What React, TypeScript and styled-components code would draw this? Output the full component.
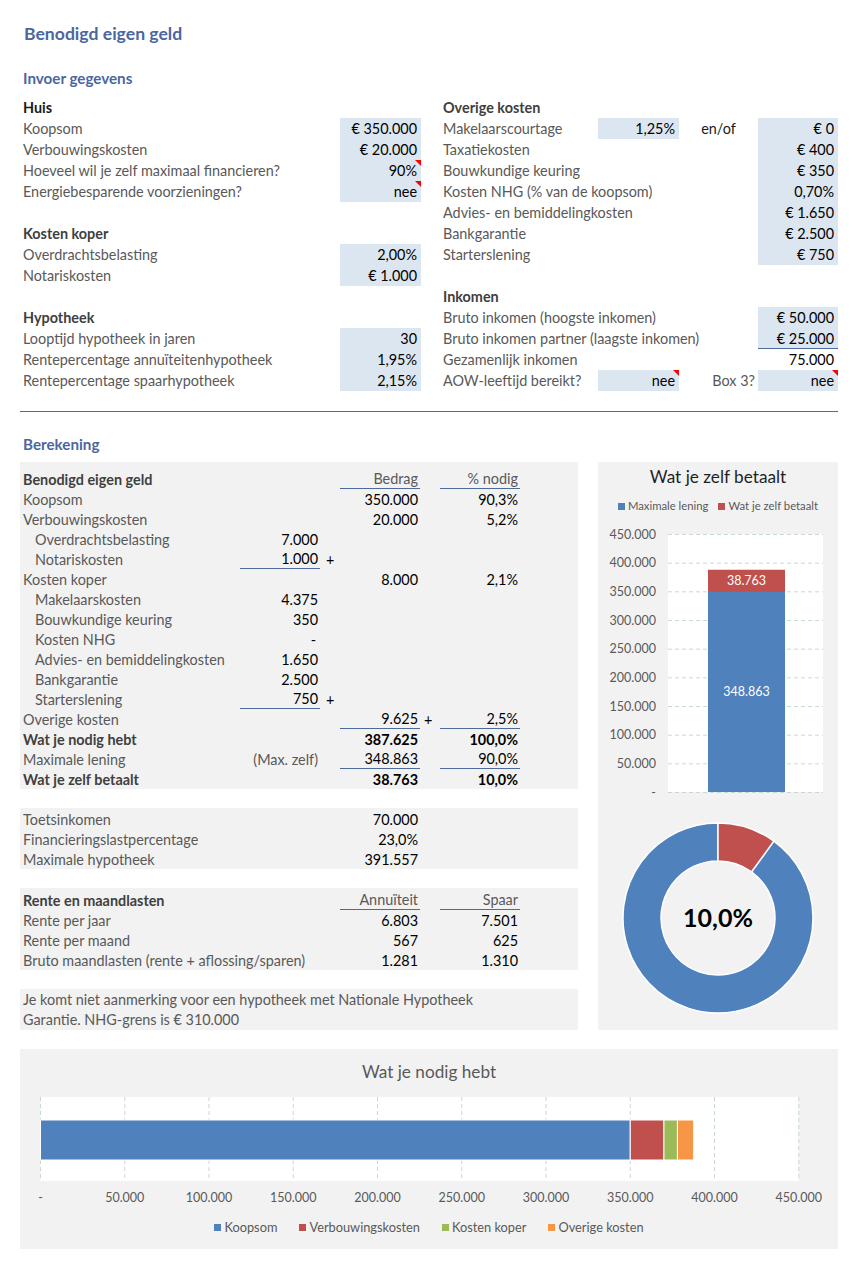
import React from "react";
import styled, { createGlobalStyle, css } from "styled-components";

const FONT = `"Lato", "Liberation Sans", Arial, sans-serif`;
const HEAD_BLUE = "#4A679F";
const LINE = "#4D6A9C";
const INPUT_BG = "#DCE6F1";
const PANEL_BG = "#F2F2F2";
const LABEL = "#595959";
const C_BLUE = "#4F81BD";
const C_RED = "#C0504D";
const C_GREEN = "#9BBB59";
const C_ORANGE = "#F79646";
const GRID = "#C8D8D6";

const GlobalStyle = createGlobalStyle`
  html, body { margin: 0; padding: 0; background: #fff; }
  body { font-family: ${FONT}; font-size: 14.4px; color: #000; }
  * { box-sizing: border-box; }
`;

const Page = styled.div`
  width: 859px;
  padding: 22px 21px 21px 20px;
`;

const Title = styled.h1`
  margin: 0 0 0 4px;
  font-size: 17.6px;
  font-weight: 700;
  line-height: 24px;
  color: ${HEAD_BLUE};
`;

const SectionTitle = styled.h2<{ $top: number }>`
  margin: ${(p) => p.$top}px 0 0 3px;
  font-size: 15.2px;
  font-weight: 700;
  line-height: 20px;
  color: ${HEAD_BLUE};
`;

const InputSection = styled.div`
  display: grid;
  grid-template-columns: 401px 398px;
  column-gap: 19px;
  margin-top: 9px;
`;

const Column = styled.div`
  display: flex;
  flex-direction: column;
`;

const Row = styled.div<{ $cols: string; $h: number }>`
  display: grid;
  grid-template-columns: ${(p) => p.$cols};
  height: ${(p) => p.$h}px;
  align-items: stretch;
`;

const Label = styled.div<{ $head?: boolean; $dark?: boolean; $indent?: boolean; $span?: string }>`
  grid-column: ${(p) => p.$span ?? "1"};
  grid-row: 1;
  display: flex;
  align-items: center;
  padding-left: ${(p) => (p.$indent ? 15 : 3)}px;
  white-space: nowrap;
  color: ${(p) => (p.$dark ? "#1a1a1a" : p.$head ? "#404040" : LABEL)};
  font-weight: ${(p) => (p.$head ? 700 : 400)};
`;

const ValueCell = styled.div<{ $input?: boolean; $flag?: boolean; $underline?: boolean; $col: number }>`
  grid-column: ${(p) => p.$col};
  grid-row: 1;
  position: relative;
  display: flex;
  align-items: center;
  justify-content: flex-end;
  padding-right: 4px;
  white-space: nowrap;
  color: #000;
  background: ${(p) => (p.$input ? INPUT_BG : "transparent")};
  border-bottom: ${(p) => (p.$underline ? `1px solid ${LINE}` : "none")};
  ${(p) =>
    p.$flag &&
    css`
      &::after {
        content: "";
        position: absolute;
        top: 0;
        right: 0;
        border-top: 6px solid #ff0000;
        border-left: 6px solid transparent;
      }
    `}
`;

const NoteCell = styled.div<{ $align: "center" | "right"; $dark?: boolean }>`
  grid-column: 3;
  grid-row: 1;
  display: flex;
  align-items: center;
  justify-content: ${(p) => (p.$align === "center" ? "center" : "flex-end")};
  padding-right: ${(p) => (p.$align === "right" ? 3 : 0)}px;
  color: ${(p) => (p.$dark ? "#1a1a1a" : LABEL)};
  white-space: nowrap;
`;

const Divider = styled.div`
  margin-top: 20px;
  border-top: 1px solid ${LINE};
`;

const CalcLayout = styled.div`
  display: grid;
  grid-template-columns: 558px 240px;
  column-gap: 20px;
  margin-top: 8px;
  align-items: start;
`;

const CalcColumn = styled.div`
  display: flex;
  flex-direction: column;
  gap: 19px;
`;

const Panel = styled.div<{ $padTop: number }>`
  background: ${PANEL_BG};
  padding-top: ${(p) => p.$padTop}px;
`;

const CalcCell = styled.div<{ $col: number; $underline?: boolean; $bold?: boolean; $gray?: boolean }>`
  grid-column: ${(p) => p.$col};
  grid-row: 1;
  display: flex;
  align-items: center;
  justify-content: flex-end;
  padding-right: 2px;
  white-space: nowrap;
  font-weight: ${(p) => (p.$bold ? 700 : 400)};
  color: ${(p) => (p.$gray ? LABEL : "#000")};
  border-bottom: ${(p) => (p.$underline ? `1px solid ${LINE}` : "none")};
`;

const PlusCell = styled.div<{ $col: number; $pad: number }>`
  grid-column: ${(p) => p.$col};
  grid-row: 1;
  display: flex;
  align-items: center;
  padding-left: ${(p) => p.$pad}px;
  color: #000;
`;

const Note = styled.p`
  margin: 0;
  padding-left: 3px;
  line-height: 20px;
  color: ${LABEL};
`;

const ChartPanel = styled.div`
  background: ${PANEL_BG};
  height: 568px;
  display: flex;
  flex-direction: column;
  align-items: center;
`;

const ChartTitle = styled.div<{ $color: string; $top: number }>`
  font-size: 17.2px;
  line-height: 24px;
  padding-top: ${(p) => p.$top}px;
  color: ${(p) => p.$color};
  text-align: center;
`;

const Legend = styled.div<{ $gap: number; $size: number; $top: number }>`
  display: flex;
  justify-content: center;
  align-items: center;
  gap: ${(p) => p.$gap}px;
  margin-top: ${(p) => p.$top}px;
  font-size: ${(p) => p.$size}px;
  line-height: 14px;
  color: ${LABEL};
  white-space: nowrap;
`;

const LegendItem = styled.span`
  display: inline-flex;
  align-items: center;
  gap: 3px;
`;

const Swatch = styled.span<{ $color: string }>`
  width: 7px;
  height: 7px;
  background: ${(p) => p.$color};
  display: inline-block;
`;

const ChartSvg = styled.svg`
  display: block;
  font-family: ${FONT};
`;

const BottomPanel = styled.div`
  margin-top: 19px;
  height: 200px;
  background: ${PANEL_BG};
  display: flex;
  flex-direction: column;
  align-items: center;
`;

type InRow = {
  label?: string;
  head?: boolean;
  dark?: boolean;
  value?: string;
  input?: boolean;
  flag?: boolean;
  underline?: boolean;
  mid?: string;
  midFlag?: boolean;
  note?: string;
  noteAlign?: "center" | "right";
  noteDark?: boolean;
};

const leftRows: InRow[] = [
  { label: "Huis", head: true, dark: true },
  { label: "Koopsom", value: "€ 350.000", input: true },
  { label: "Verbouwingskosten", value: "€ 20.000", input: true },
  { label: "Hoeveel wil je zelf maximaal financieren?", value: "90%", input: true, flag: true },
  { label: "Energiebesparende voorzieningen?", value: "nee", input: true, flag: true },
  {},
  { label: "Kosten koper", head: true },
  { label: "Overdrachtsbelasting", value: "2,00%", input: true },
  { label: "Notariskosten", value: "€ 1.000", input: true },
  {},
  { label: "Hypotheek", head: true },
  { label: "Looptijd hypotheek in jaren", value: "30", input: true },
  { label: "Rentepercentage annuïteitenhypotheek", value: "1,95%", input: true },
  { label: "Rentepercentage spaarhypotheek", value: "2,15%", input: true },
];

const rightRows: InRow[] = [
  { label: "Overige kosten", head: true },
  { label: "Makelaarscourtage", mid: "1,25%", note: "en/of", noteAlign: "center", noteDark: true, value: "€ 0", input: true },
  { label: "Taxatiekosten", value: "€ 400", input: true },
  { label: "Bouwkundige keuring", value: "€ 350", input: true },
  { label: "Kosten NHG (% van de koopsom)", value: "0,70%", input: true },
  { label: "Advies- en bemiddelingkosten", value: "€ 1.650", input: true },
  { label: "Bankgarantie", value: "€ 2.500", input: true },
  { label: "Starterslening", value: "€ 750", input: true },
  {},
  { label: "Inkomen", head: true },
  { label: "Bruto inkomen (hoogste inkomen)", value: "€ 50.000", input: true },
  { label: "Bruto inkomen partner (laagste inkomen)", value: "€ 25.000", input: true, underline: true },
  { label: "Gezamenlijk inkomen", value: "75.000" },
  { label: "AOW-leeftijd bereikt?", mid: "nee", midFlag: true, note: "Box 3?", noteAlign: "right", value: "nee", input: true, flag: true },
];

type CRow = {
  label: string;
  bold?: boolean;
  indent?: boolean;
  c?: string;
  cU?: boolean;
  cPlus?: boolean;
  cGray?: boolean;
  e?: string;
  eU?: boolean;
  ePlus?: boolean;
  g?: string;
  gU?: boolean;
  headVals?: boolean;
};

const panel1: CRow[] = [
  { label: "Benodigd eigen geld", bold: true, e: "Bedrag", eU: true, g: "% nodig", gU: true, headVals: true },
  { label: "Koopsom", e: "350.000", g: "90,3%" },
  { label: "Verbouwingskosten", e: "20.000", g: "5,2%" },
  { label: "Overdrachtsbelasting", indent: true, c: "7.000" },
  { label: "Notariskosten", indent: true, c: "1.000", cU: true, cPlus: true },
  { label: "Kosten koper", e: "8.000", g: "2,1%" },
  { label: "Makelaarskosten", indent: true, c: "4.375" },
  { label: "Bouwkundige keuring", indent: true, c: "350" },
  { label: "Kosten NHG", indent: true, c: "-\u2009" },
  { label: "Advies- en bemiddelingkosten", indent: true, c: "1.650" },
  { label: "Bankgarantie", indent: true, c: "2.500" },
  { label: "Starterslening", indent: true, c: "750", cU: true, cPlus: true },
  { label: "Overige kosten", e: "9.625", eU: true, ePlus: true, g: "2,5%", gU: true },
  { label: "Wat je nodig hebt", bold: true, e: "387.625", g: "100,0%" },
  { label: "Maximale lening", c: "(Max. zelf)", cGray: true, e: "348.863", eU: true, g: "90,0%", gU: true },
  { label: "Wat je zelf betaalt", bold: true, e: "38.763", g: "10,0%" },
];

const panel2: CRow[] = [
  { label: "Toetsinkomen", e: "70.000" },
  { label: "Financieringslastpercentage", e: "23,0%" },
  { label: "Maximale hypotheek", e: "391.557" },
];

const panel3: CRow[] = [
  { label: "Rente en maandlasten", bold: true, e: "Annuïteit", eU: true, g: "Spaar", gU: true, headVals: true },
  { label: "Rente per jaar", e: "6.803", g: "7.501" },
  { label: "Rente per maand", e: "567", g: "625" },
  { label: "Bruto maandlasten (rente + aflossing/sparen)", e: "1.281", g: "1.310" },
];

const CALC_COLS = "220px 80px 20px 80px 20px 80px 58px";

function InputRowView({ r, side }: { r: InRow; side: "left" | "right" }) {
  if (side === "left") {
    return (
      <Row $cols="320px 81px" $h={21}>
        {r.label ? (
          <Label $head={r.head} $dark={r.dark}>
            {r.label}
          </Label>
        ) : null}
        {r.value !== undefined && (
          <ValueCell $col={2} $input={r.input} $flag={r.flag} $underline={r.underline}>
            {r.value}
          </ValueCell>
        )}
      </Row>
    );
  }
  return (
    <Row $cols="158px 81px 79px 80px" $h={21}>
      {r.label ? (
        <Label $head={r.head} $dark={r.dark} $span={r.mid ? "1" : "1 / 4"}>
          {r.label}
        </Label>
      ) : null}
      {r.mid && (
        <ValueCell $col={2} $input $flag={r.midFlag}>
          {r.mid}
        </ValueCell>
      )}
      {r.note && (
        <NoteCell $align={r.noteAlign ?? "center"} $dark={r.noteDark}>
          {r.note}
        </NoteCell>
      )}
      {r.value !== undefined && (
        <ValueCell $col={4} $input={r.input} $flag={r.flag} $underline={r.underline}>
          {r.value}
        </ValueCell>
      )}
    </Row>
  );
}

function CalcRowView({ r }: { r: CRow }) {
  const valBold = r.bold && !r.headVals;
  return (
    <Row $cols={CALC_COLS} $h={20}>
      <Label $head={r.bold} $indent={r.indent}>
        {r.label}
      </Label>
      {r.c && (
        <CalcCell $col={2} $underline={r.cU} $gray={r.cGray}>
          {r.c}
        </CalcCell>
      )}
      {r.cPlus && (
        <PlusCell $col={3} $pad={6}>
          +
        </PlusCell>
      )}
      {r.e && (
        <CalcCell $col={4} $underline={r.eU} $bold={valBold} $gray={r.headVals}>
          {r.e}
        </CalcCell>
      )}
      {r.ePlus && (
        <PlusCell $col={5} $pad={4}>
          +
        </PlusCell>
      )}
      {r.g && (
        <CalcCell $col={6} $underline={r.gU} $bold={valBold} $gray={r.headVals}>
          {r.g}
        </CalcCell>
      )}
    </Row>
  );
}

/* ---------- stacked column chart ---------- */
function ColumnChart() {
  const top = 21;
  const bottom = 279;
  const perK = (bottom - top) / 450;
  const y = (k: number) => bottom - k * perK;
  const ticks = [0, 50, 100, 150, 200, 250, 300, 350, 400, 450];
  const fmt = (k: number) => (k === 0 ? "-" : `${k}.000`);
  const loan = 348.863;
  const total = 387.625;
  return (
    <ChartSvg width={240} height={289} viewBox="0 0 240 289">
      <rect x={70} y={top} width={155} height={bottom - top} fill="#fff" />
      {ticks.map((t) => (
        <g key={t}>
          <line x1={70} x2={225} y1={y(t) + 0.5} y2={y(t) + 0.5} stroke={GRID} strokeDasharray="4 3" />
          <text x={58} y={y(t) + 4.5} fontSize={12.5} fill={LABEL} textAnchor="end">
            {fmt(t)}
          </text>
        </g>
      ))}
      <rect x={110} y={y(loan)} width={77} height={bottom - y(loan)} fill={C_BLUE} />
      <rect x={110} y={y(total)} width={77} height={y(loan) - y(total)} fill={C_RED} />
      <text x={148.5} y={(y(loan) + y(total)) / 2 + 4.5} fontSize={12.5} fill="#fff" textAnchor="middle">
        38.763
      </text>
      <text x={148.5} y={(y(loan) + bottom) / 2 + 4.5} fontSize={12.5} fill="#fff" textAnchor="middle">
        348.863
      </text>
    </ChartSvg>
  );
}

/* ---------- donut ---------- */
function arc(cx: number, cy: number, R: number, r: number, a0: number, a1: number) {
  const rad = (a: number) => (a * Math.PI) / 180;
  const pt = (rr: number, a: number) => [cx + rr * Math.sin(rad(a)), cy - rr * Math.cos(rad(a))];
  const large = a1 - a0 > 180 ? 1 : 0;
  const [x0, y0] = pt(R, a0);
  const [x1, y1] = pt(R, a1);
  const [x2, y2] = pt(r, a1);
  const [x3, y3] = pt(r, a0);
  return `M${x0} ${y0} A${R} ${R} 0 ${large} 1 ${x1} ${y1} L${x2} ${y2} A${r} ${r} 0 ${large} 0 ${x3} ${y3} Z`;
}

function Donut() {
  const cx = 120;
  const cy = 116;
  return (
    <ChartSvg width={240} height={228} viewBox="0 0 240 228">
      <path d={arc(cx, cy, 95, 57, 36, 360)} fill={C_BLUE} stroke="#fff" strokeWidth={1.5} />
      <path d={arc(cx, cy, 95, 57, 0, 36)} fill={C_RED} stroke="#fff" strokeWidth={1.5} />
      <text x={cx} y={cy + 9} fontSize={25} fontWeight={700} fill="#000" textAnchor="middle">
        10,0%
      </text>
    </ChartSvg>
  );
}

/* ---------- horizontal stacked bar ---------- */
function BarChart() {
  const x0 = 20.5;
  const perK = 1.685;
  const x = (k: number) => x0 + k * perK;
  const ticks = [0, 50, 100, 150, 200, 250, 300, 350, 400, 450];
  const segs = [
    { from: 0, to: 350, color: C_BLUE },
    { from: 350, to: 370, color: C_RED },
    { from: 370, to: 378, color: C_GREEN },
    { from: 378, to: 387.625, color: C_ORANGE },
  ];
  return (
    <ChartSvg width={818} height={120} viewBox="0 0 818 120">
      <rect x={x0} y={13} width={x(450) - x0} height={84} fill="#fff" />
      {ticks.map((t) => (
        <g key={t}>
          <line x1={x(t)} x2={x(t)} y1={13} y2={97} stroke={GRID} strokeDasharray="4 3" />
          <text x={x(t)} y={118} fontSize={12.5} fill={LABEL} textAnchor="middle">
            {t === 0 ? "-" : `${t}.000`}
          </text>
        </g>
      ))}
      {segs.map((s) => (
        <rect
          key={s.color}
          x={x(s.from)}
          y={36}
          width={x(s.to) - x(s.from)}
          height={40}
          fill={s.color}
          stroke="#fff"
          strokeWidth={1}
        />
      ))}
    </ChartSvg>
  );
}

export default function App() {
  return (
    <>
      <GlobalStyle />
      <Page>
        <Title>Benodigd eigen geld</Title>
        <SectionTitle $top={22}>Invoer gegevens</SectionTitle>

        <InputSection>
          <Column>
            {leftRows.map((r, i) => (
              <InputRowView key={i} r={r} side="left" />
            ))}
          </Column>
          <Column>
            {rightRows.map((r, i) => (
              <InputRowView key={i} r={r} side="right" />
            ))}
          </Column>
        </InputSection>

        <Divider />

        <SectionTitle $top={22}>Berekening</SectionTitle>

        <CalcLayout>
          <CalcColumn>
            <Panel $padTop={7}>
              {panel1.map((r, i) => (
                <CalcRowView key={i} r={r} />
              ))}
            </Panel>
            <Panel $padTop={1}>
              {panel2.map((r, i) => (
                <CalcRowView key={i} r={r} />
              ))}
            </Panel>
            <Panel $padTop={2}>
              {panel3.map((r, i) => (
                <CalcRowView key={i} r={r} />
              ))}
            </Panel>
            <Panel $padTop={1}>
              <Note>
                Je komt niet aanmerking voor een hypotheek met Nationale Hypotheek
                <br />
                Garantie. NHG-grens is € 310.000
              </Note>
            </Panel>
          </CalcColumn>

          <ChartPanel>
            <ChartTitle $color="#1f1f1f" $top={3}>
              Wat je zelf betaalt
            </ChartTitle>
            <Legend $gap={10} $size={11.3} $top={10}>
              <LegendItem>
                <Swatch $color={C_BLUE} />
                Maximale lening
              </LegendItem>
              <LegendItem>
                <Swatch $color={C_RED} />
                Wat je zelf betaalt
              </LegendItem>
            </Legend>
            <ColumnChart />
            <Donut />
          </ChartPanel>
        </CalcLayout>

        <BottomPanel>
          <ChartTitle $color={LABEL} $top={11}>
            Wat je nodig hebt
          </ChartTitle>
          <BarChart />
          <Legend $gap={22} $size={12.8} $top={16}>
            <LegendItem>
              <Swatch $color={C_BLUE} />
              Koopsom
            </LegendItem>
            <LegendItem>
              <Swatch $color={C_RED} />
              Verbouwingskosten
            </LegendItem>
            <LegendItem>
              <Swatch $color={C_GREEN} />
              Kosten koper
            </LegendItem>
            <LegendItem>
              <Swatch $color={C_ORANGE} />
              Overige kosten
            </LegendItem>
          </Legend>
        </BottomPanel>
      </Page>
    </>
  );
}
